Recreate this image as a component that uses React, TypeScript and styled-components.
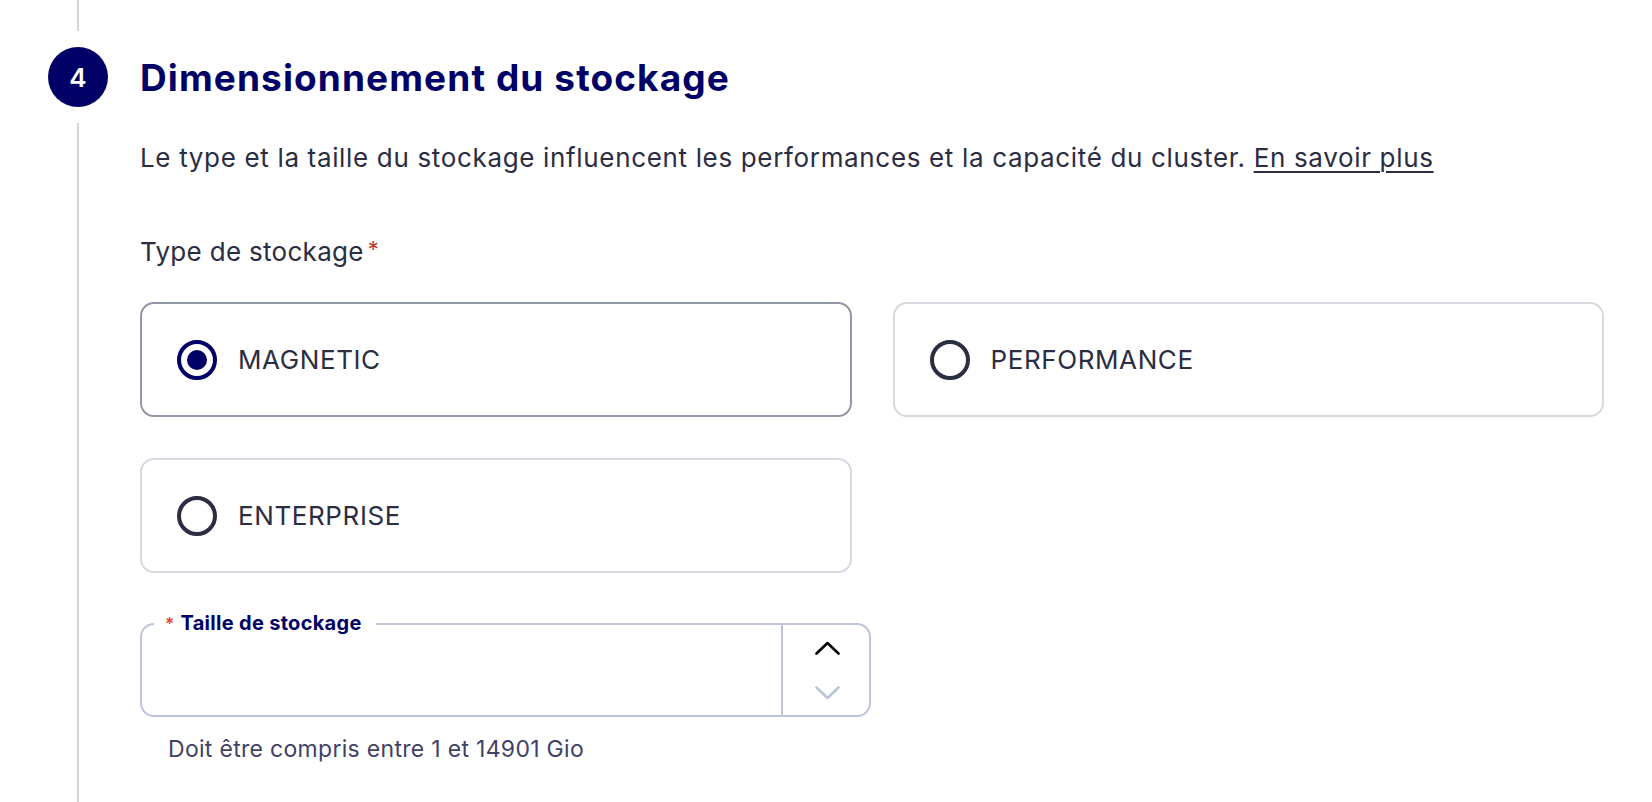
import React from 'react'
import styled, { createGlobalStyle } from 'styled-components'

const GlobalStyle = createGlobalStyle`
  html, body {
    margin: 0;
    padding: 0;
    background: #ffffff;
  }
  body {
    font-family: Inter, 'Liberation Sans', sans-serif;
    color: #2b2d42;
  }
`

const Page = styled.div`
  display: grid;
  grid-template-columns: 60px 1fr;
  column-gap: 32px;
  padding: 0 48px 0 48px;
  min-height: 100vh;
  box-sizing: border-box;
`

const Timeline = styled.div`
  display: flex;
  flex-direction: column;
  align-items: center;
`

const Line = styled.div<{ $grow?: boolean }>`
  width: 2px;
  background: #d3d5dc;
  height: 31px;
  flex: ${(p) => (p.$grow ? '1 1 auto' : '0 0 auto')};
`

const StepBadge = styled.div`
  width: 60px;
  height: 60px;
  margin: 16px 0;
  border-radius: 50%;
  background: #000066;
  color: #ffffff;
  display: flex;
  align-items: center;
  justify-content: center;
  font-family: Inter, 'Liberation Sans', sans-serif;
  font-weight: 600;
  font-size: 26px;
`

const Content = styled.div`
  display: flex;
  flex-direction: column;
  padding-top: 47px;
`

const Title = styled.h2`
  margin: 0;
  padding-top: 1px;
  height: 59px;
  line-height: 60px;
  font-family: Inter, 'Liberation Sans', sans-serif;
  font-weight: 700;
  font-size: 37px;
  letter-spacing: 1.1px;
  color: #000066;
`

const Intro = styled.p`
  margin: 33px 0 0;
  font-size: 26px;
  line-height: 36px;
  letter-spacing: 0.66px;
  color: #2b2d42;
`

const Link = styled.a`
  color: #2b2d42;
  text-decoration: underline;
  text-underline-offset: 4px;
  text-decoration-thickness: 2px;
`

const FieldLabel = styled.div`
  margin-top: 55px;
  font-size: 26px;
  line-height: 36px;
  letter-spacing: 0.3px;
  color: #2b2d42;
`

const Required = styled.span`
  color: #c0392b;
  margin-left: 4px;
  font-size: 22px;
  vertical-align: 4px;
`

const CardGrid = styled.div`
  margin-top: 32px;
  display: grid;
  grid-template-columns: 1fr 1fr;
  gap: 41px 41px;
`

const Card = styled.label<{ $selected?: boolean }>`
  height: 115px;
  box-sizing: border-box;
  border: 2px solid ${(p) => (p.$selected ? '#9197a7' : '#d6d9df')};
  border-radius: 14px;
  display: flex;
  align-items: center;
  gap: 21px;
  padding-left: 35px;
  cursor: pointer;
`

const Radio = styled.span<{ $checked?: boolean }>`
  width: 40px;
  height: 40px;
  box-sizing: border-box;
  border-radius: 50%;
  border: 4px solid ${(p) => (p.$checked ? '#000066' : '#2b2d42')};
  display: flex;
  align-items: center;
  justify-content: center;
  &::after {
    content: '';
    width: 20px;
    height: 20px;
    border-radius: 50%;
    background: #000066;
    display: ${(p) => (p.$checked ? 'block' : 'none')};
  }
`

const CardText = styled.span`
  font-size: 26px;
  letter-spacing: 0.6px;
  color: #2b2d42;
`

const NumberField = styled.div`
  position: relative;
  margin-top: 50px;
  width: 731px;
  height: 94px;
  box-sizing: border-box;
  border: 2px solid #bcc5dd;
  border-radius: 14px;
  display: flex;
`

const Legend = styled.span`
  position: absolute;
  top: -14px;
  left: 12px;
  padding: 0 14px 0 11px;
  background: #ffffff;
  font-size: 20px;
  line-height: 24px;
  font-weight: 700;
  letter-spacing: 0.3px;
  color: #000066;
  display: flex;
  align-items: baseline;
  gap: 6px;
`

const LegendStar = styled.span`
  color: #e8473a;
  font-size: 17px;
  font-weight: 600;
`

const Input = styled.input`
  flex: 1;
  border: none;
  outline: none;
  background: transparent;
  font-family: inherit;
  font-size: 25px;
  padding: 0 24px;
  border-radius: 14px 0 0 14px;
`

const Spinner = styled.div`
  width: 86px;
  border-left: 2px solid #bcc5dd;
  display: flex;
  flex-direction: column;
`

const SpinButton = styled.button<{ $disabled?: boolean }>`
  flex: 1;
  border: none;
  background: transparent;
  padding: 0 0 0 3px;
  display: flex;
  align-items: center;
  justify-content: center;
  color: ${(p) => (p.$disabled ? '#b9c3dc' : '#000000')};
  cursor: ${(p) => (p.$disabled ? 'default' : 'pointer')};
`

const Helper = styled.div`
  margin: 17px 0 0 28px;
  font-size: 23px;
  line-height: 30px;
  letter-spacing: 0.3px;
  color: #3f4266;
`

const Chevron = ({ up }: { up?: boolean }) => (
  <svg width="25" height="14" viewBox="0 0 25 14" fill="none">
    <polyline
      points={up ? '1.5,12.5 12.5,2 23.5,12.5' : '1.5,1.5 12.5,12 23.5,1.5'}
      stroke="currentColor"
      strokeWidth="2.6"
      strokeLinecap="round"
      strokeLinejoin="round"
    />
  </svg>
)

const storageTypes = [
  { id: 'MAGNETIC', checked: true },
  { id: 'PERFORMANCE', checked: false },
  { id: 'ENTERPRISE', checked: false }
]

const App = () => {
  return (
    <>
      <GlobalStyle />
      <Page>
        <Timeline>
          <Line />
          <StepBadge>4</StepBadge>
          <Line $grow />
        </Timeline>
        <Content>
          <Title>Dimensionnement du stockage</Title>
          <Intro>
            Le type et la taille du stockage influencent les performances et la capacité du
            cluster. <Link href="#">En savoir plus</Link>
          </Intro>
          <FieldLabel>
            Type de stockage<Required>*</Required>
          </FieldLabel>
          <CardGrid>
            {storageTypes.map((t) => (
              <Card key={t.id} $selected={t.checked}>
                <Radio $checked={t.checked} />
                <CardText>{t.id}</CardText>
              </Card>
            ))}
          </CardGrid>
          <NumberField>
            <Legend>
              <LegendStar>*</LegendStar>Taille de stockage
            </Legend>
            <Input type="text" aria-label="Taille de stockage" />
            <Spinner>
              <SpinButton>
                <Chevron up />
              </SpinButton>
              <SpinButton $disabled>
                <Chevron />
              </SpinButton>
            </Spinner>
          </NumberField>
          <Helper>Doit être compris entre 1 et 14901 Gio</Helper>
        </Content>
      </Page>
    </>
  )
}

export default App
